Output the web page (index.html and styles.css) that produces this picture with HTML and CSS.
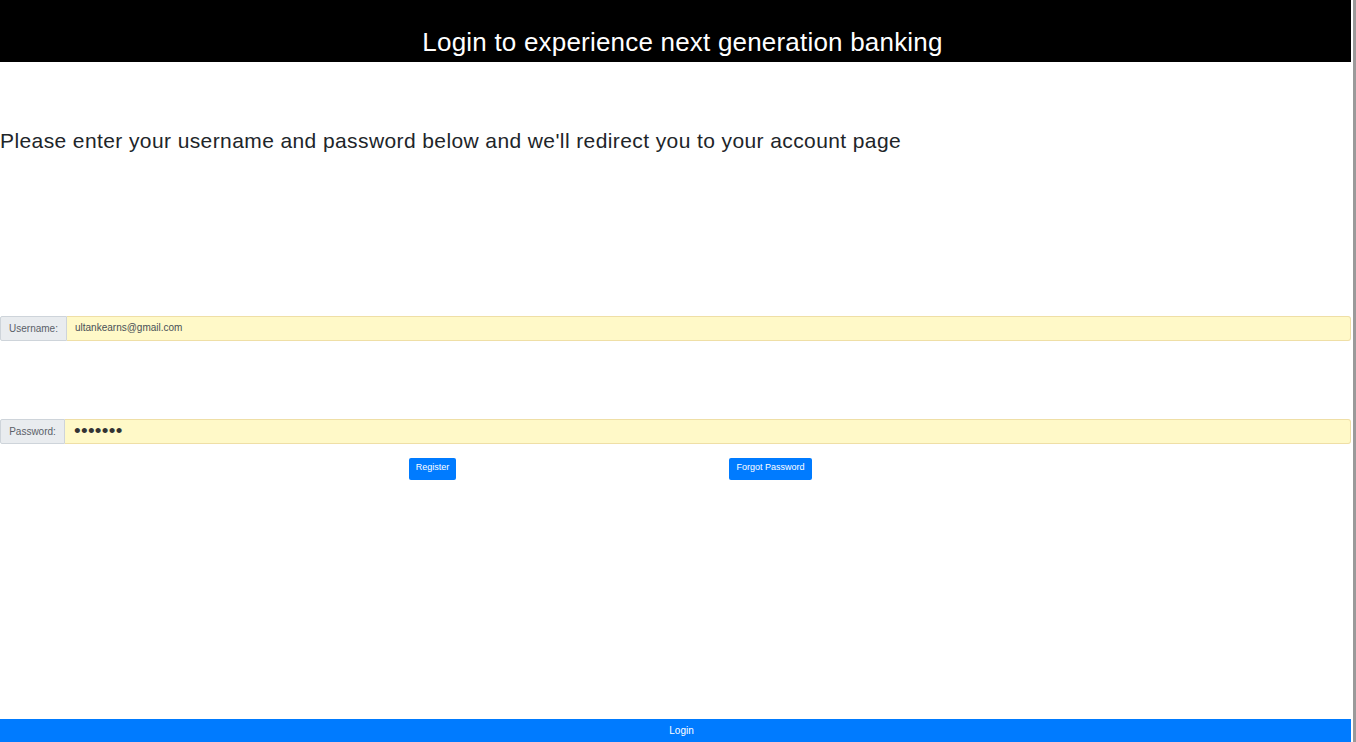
FILE: index.html
```html
<!DOCTYPE html>
<html>
<head>
<meta charset="utf-8">
<link rel="stylesheet" href="styles.css">
</head>
<body>
<div class="page">
  <header class="top">Login to experience next generation banking</header>
  <p class="intro">Please enter your username and password below and we'll redirect you to your account page</p>
  <div class="group group-user">
    <span class="label">Username:</span>
    <span class="field">ultankearns@gmail.com</span>
  </div>
  <div class="group group-pass">
    <span class="label label-pass">Password:</span>
    <span class="field dots">&#8226;&#8226;&#8226;&#8226;&#8226;&#8226;&#8226;</span>
  </div>
  <div class="actions">
    <button class="btn btn-reg">Register</button>
    <button class="btn btn-forgot">Forgot Password</button>
  </div>
  <div class="spacer"></div>
  <footer class="login">Login</footer>
</div>
</body>
</html>
```

FILE: styles.css
```css
html, body { margin: 0; padding: 0; background: #fff; height: 100%; overflow: hidden; }
body { font-family: "Liberation Sans", Arial, sans-serif; }
.page {
  width: 1351px;
  height: 742px;
  display: flex;
  flex-direction: column;
  border-right: 2px solid #fff;
  box-shadow: 3px 0 0 #9a9a9a;
}
.top {
  background: #000;
  color: #fff;
  height: 62px;
  box-sizing: border-box;
  padding-top: 24px;
  font-size: 26px;
  line-height: 36px;
  text-align: center;
  padding-left: 14px;
  letter-spacing: 0.2px;
}
.intro {
  margin: 66px 0 0 0;
  font-size: 21px;
  line-height: 26px;
  color: #212529;
  letter-spacing: 0.4px;
}
.group {
  display: flex;
  height: 25px;
  font-size: 10px;
}
.group-user { margin-top: 162px; }
.group-pass { margin-top: 78px; }
.label {
  width: 67px;
  box-sizing: border-box;
  background: #e9ecef;
  border: 1px solid #ced4da;
  border-radius: 2px 0 0 2px;
  color: #5a6068;
  display: flex;
  align-items: center;
  justify-content: center;
}
.label-pass { width: 65px; }
.field {
  flex: 1;
  background: #fff9c8;
  border: 1px solid #efdfa6;
  border-left: none;
  border-radius: 0 3px 3px 0;
  color: #495057;
  display: flex;
  align-items: center;
  padding-left: 8px;
  padding-bottom: 3px;
  box-sizing: border-box;
}
.dots { font-size: 19px; color: #333; letter-spacing: 0.3px; padding-left: 9px; padding-bottom: 1px; }
.actions {
  display: flex;
  margin-top: 14px;
  padding-left: 409px;
}
.btn {
  font-family: inherit;
  background: #007bff;
  color: #fff;
  border: none;
  border-radius: 2px;
  font-size: 9px;
  height: 22px;
  padding: 0 6px 4px;
  margin: 0;
}
.btn-reg { width: 47px; }
.btn-forgot { width: 83px; margin-left: 273px; }
.spacer { flex: 1; }
.login {
  background: #007bff;
  color: #fff;
  height: 23px;
  font-size: 10px;
  line-height: 23px;
  text-align: center;
  padding-left: 12px;
}
```
